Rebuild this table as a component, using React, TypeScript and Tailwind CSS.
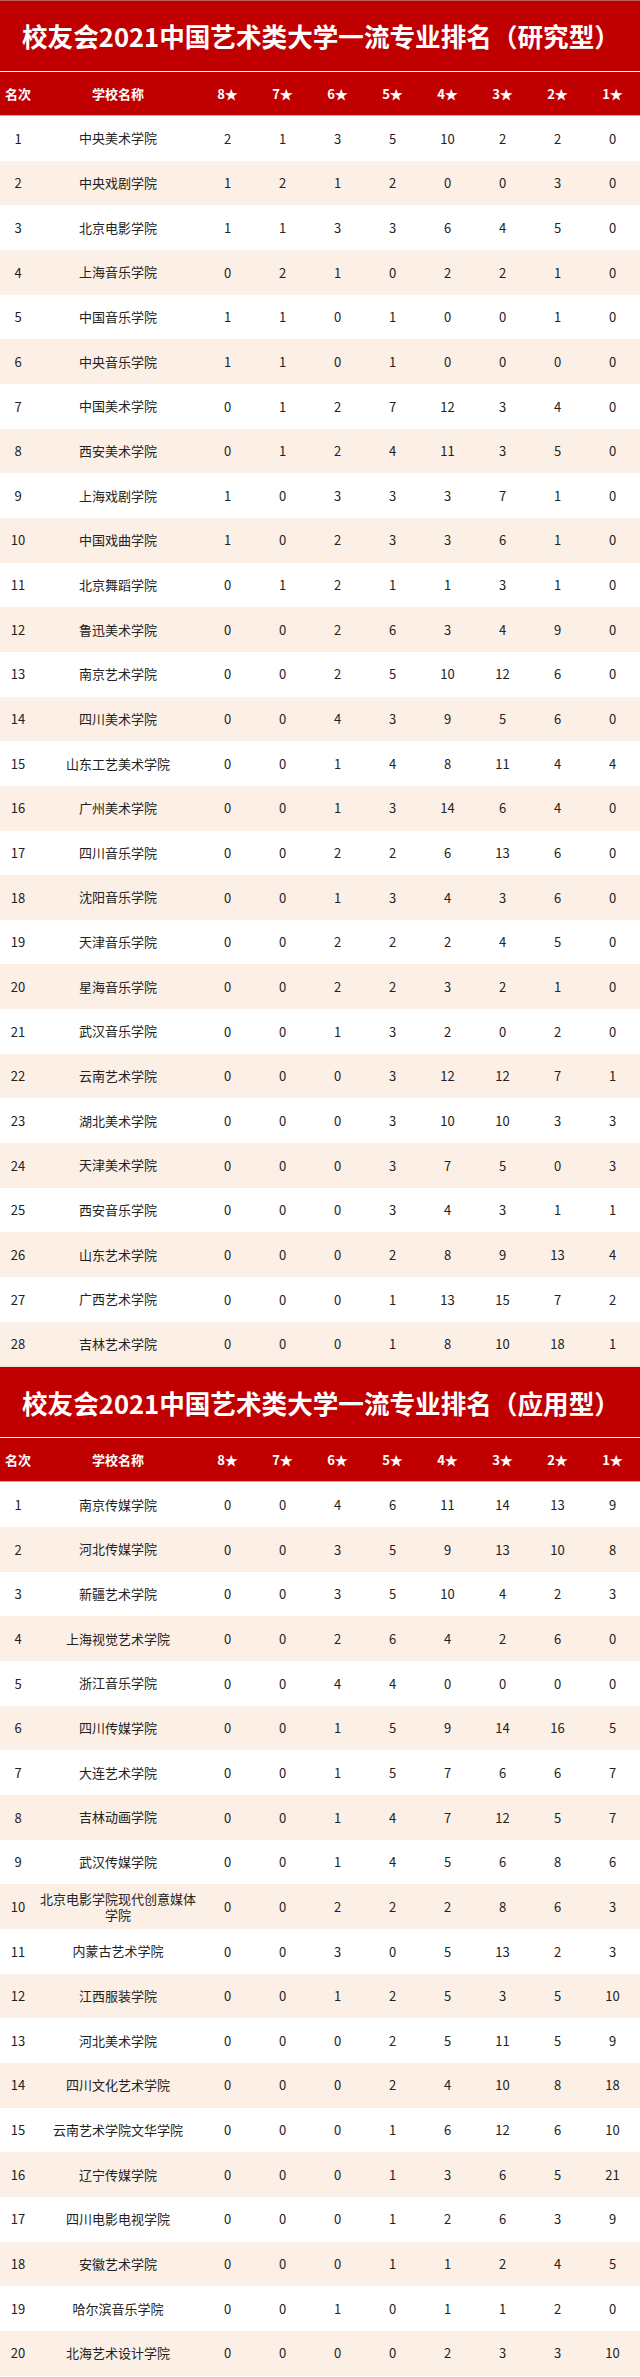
import React from "react";

type Row = [number, string, number[]];

const research: Row[] = [
  [1, "中央美术学院", [2, 1, 3, 5, 10, 2, 2, 0]],
  [2, "中央戏剧学院", [1, 2, 1, 2, 0, 0, 3, 0]],
  [3, "北京电影学院", [1, 1, 3, 3, 6, 4, 5, 0]],
  [4, "上海音乐学院", [0, 2, 1, 0, 2, 2, 1, 0]],
  [5, "中国音乐学院", [1, 1, 0, 1, 0, 0, 1, 0]],
  [6, "中央音乐学院", [1, 1, 0, 1, 0, 0, 0, 0]],
  [7, "中国美术学院", [0, 1, 2, 7, 12, 3, 4, 0]],
  [8, "西安美术学院", [0, 1, 2, 4, 11, 3, 5, 0]],
  [9, "上海戏剧学院", [1, 0, 3, 3, 3, 7, 1, 0]],
  [10, "中国戏曲学院", [1, 0, 2, 3, 3, 6, 1, 0]],
  [11, "北京舞蹈学院", [0, 1, 2, 1, 1, 3, 1, 0]],
  [12, "鲁迅美术学院", [0, 0, 2, 6, 3, 4, 9, 0]],
  [13, "南京艺术学院", [0, 0, 2, 5, 10, 12, 6, 0]],
  [14, "四川美术学院", [0, 0, 4, 3, 9, 5, 6, 0]],
  [15, "山东工艺美术学院", [0, 0, 1, 4, 8, 11, 4, 4]],
  [16, "广州美术学院", [0, 0, 1, 3, 14, 6, 4, 0]],
  [17, "四川音乐学院", [0, 0, 2, 2, 6, 13, 6, 0]],
  [18, "沈阳音乐学院", [0, 0, 1, 3, 4, 3, 6, 0]],
  [19, "天津音乐学院", [0, 0, 2, 2, 2, 4, 5, 0]],
  [20, "星海音乐学院", [0, 0, 2, 2, 3, 2, 1, 0]],
  [21, "武汉音乐学院", [0, 0, 1, 3, 2, 0, 2, 0]],
  [22, "云南艺术学院", [0, 0, 0, 3, 12, 12, 7, 1]],
  [23, "湖北美术学院", [0, 0, 0, 3, 10, 10, 3, 3]],
  [24, "天津美术学院", [0, 0, 0, 3, 7, 5, 0, 3]],
  [25, "西安音乐学院", [0, 0, 0, 3, 4, 3, 1, 1]],
  [26, "山东艺术学院", [0, 0, 0, 2, 8, 9, 13, 4]],
  [27, "广西艺术学院", [0, 0, 0, 1, 13, 15, 7, 2]],
  [28, "吉林艺术学院", [0, 0, 0, 1, 8, 10, 18, 1]],
];

const applied: Row[] = [
  [1, "南京传媒学院", [0, 0, 4, 6, 11, 14, 13, 9]],
  [2, "河北传媒学院", [0, 0, 3, 5, 9, 13, 10, 8]],
  [3, "新疆艺术学院", [0, 0, 3, 5, 10, 4, 2, 3]],
  [4, "上海视觉艺术学院", [0, 0, 2, 6, 4, 2, 6, 0]],
  [5, "浙江音乐学院", [0, 0, 4, 4, 0, 0, 0, 0]],
  [6, "四川传媒学院", [0, 0, 1, 5, 9, 14, 16, 5]],
  [7, "大连艺术学院", [0, 0, 1, 5, 7, 6, 6, 7]],
  [8, "吉林动画学院", [0, 0, 1, 4, 7, 12, 5, 7]],
  [9, "武汉传媒学院", [0, 0, 1, 4, 5, 6, 8, 6]],
  [10, "北京电影学院现代创意媒体学院", [0, 0, 2, 2, 2, 8, 6, 3]],
  [11, "内蒙古艺术学院", [0, 0, 3, 0, 5, 13, 2, 3]],
  [12, "江西服装学院", [0, 0, 1, 2, 5, 3, 5, 10]],
  [13, "河北美术学院", [0, 0, 0, 2, 5, 11, 5, 9]],
  [14, "四川文化艺术学院", [0, 0, 0, 2, 4, 10, 8, 18]],
  [15, "云南艺术学院文华学院", [0, 0, 0, 1, 6, 12, 6, 10]],
  [16, "辽宁传媒学院", [0, 0, 0, 1, 3, 6, 5, 21]],
  [17, "四川电影电视学院", [0, 0, 0, 1, 2, 6, 3, 9]],
  [18, "安徽艺术学院", [0, 0, 0, 1, 1, 2, 4, 5]],
  [19, "哈尔滨音乐学院", [0, 0, 1, 0, 1, 1, 2, 0]],
  [20, "北海艺术设计学院", [0, 0, 0, 0, 2, 3, 3, 10]],
];

const stars = ["8★", "7★", "6★", "5★", "4★", "3★", "2★", "1★"];

function Section({ title, rows, top }: { title: string; rows: Row[]; top: boolean }) {
  return (
    <div>
      <div
        className={`h-[71px] bg-[#c00000] flex items-center pl-[22px] ${
          top ? "border-t border-[#b86060]" : "border-t border-[#f3d9d9]"
        }`}
      >
        <h1 className="text-white font-bold text-[25.6px] leading-none tracking-[0px]">{title}</h1>
      </div>
      <div className="h-px bg-white" />
      <div className="grid grid-cols-[36px_164px_repeat(8,55px)] h-[44px] bg-[#c00000] items-center text-white font-bold text-[13px] border-b border-[#e8a0a0]">
        <div className="text-center">名次</div>
        <div className="text-center">学校名称</div>
        {stars.map((s) => (
          <div key={s} className="text-center">
            {s}
          </div>
        ))}
      </div>
      {rows.map(([rank, name, vals], i) => (
        <div
          key={rank}
          className={`grid grid-cols-[36px_164px_repeat(8,55px)] h-[44.67px] items-center text-[13px] text-[#222222] ${
            i % 2 === 0 ? "bg-white" : "bg-[#fcefe5]"
          }`}
        >
          <div className="text-center">{rank}</div>
          <div className="text-center px-[4px] leading-[16px]">{name}</div>
          {vals.map((v, j) => (
            <div key={j} className="text-center">
              {v}
            </div>
          ))}
        </div>
      ))}
    </div>
  );
}

export default function App() {
  return (
    <div
      className="w-[640px] bg-white"
      style={{ fontFamily: '"Noto Sans CJK SC", "Noto Sans", sans-serif' }}
    >
      <Section title="校友会2021中国艺术类大学一流专业排名（研究型）" rows={research} top={true} />
      <Section title="校友会2021中国艺术类大学一流专业排名（应用型）" rows={applied} top={false} />
    </div>
  );
}
